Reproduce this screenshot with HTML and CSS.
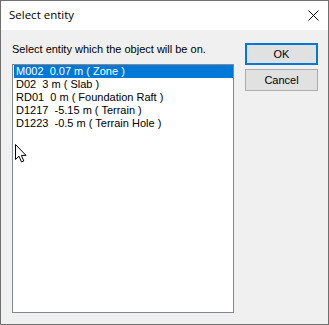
FILE: index.html
```html
<!DOCTYPE html>
<html lang="en">

<head>
    <meta charset="UTF-8">
    <title>Select entity</title>
    <link rel="stylesheet" href="styles.css">
</head>

<body>
    <div class="window">
        <!-- 标题栏 -->
        <div class="titlebar">
            <span class="title">Select entity</span>
            <svg class="close" width="11" height="11" viewBox="0 0 11 11">
                <path d="M0.5 0.5 L10.5 10.5 M10.5 0.5 L0.5 10.5" stroke="#000" stroke-width="1" fill="none" />
            </svg>
        </div>

        <!-- 内容区 -->
        <div class="content">
            <div class="left">
                <div class="label">Select entity which the object will be on.</div>
                <div class="list">
                    <div class="item selected">M002  0.07 m ( Zone )</div>
                    <div class="item">D02  3 m ( Slab )</div>
                    <div class="item">RD01  0 m ( Foundation Raft )</div>
                    <div class="item">D1217  -5.15 m ( Terrain )</div>
                    <div class="item">D1223  -0.5 m ( Terrain Hole )</div>
                    <svg class="cursor" width="13" height="20" viewBox="0 0 13 20">
                        <path d="M0.5 0.5 L0.5 15.5 L4 12.2 L6.5 18 L8.8 17 L6.4 11.4 L11 11.4 Z" fill="#fff" stroke="#000" stroke-width="1" stroke-linejoin="miter" />
                    </svg>
                </div>
            </div>
            <div class="buttons">
                <button class="btn default">OK</button>
                <button class="btn">Cancel</button>
            </div>
        </div>
    </div>
</body>

</html>
```

FILE: styles.css
```css
/* 页面基本样式 */
body {
    margin: 0;
    background-color: #f0f0f0;
}

/* 对话框窗口 */
.window {
    width: 329px;
    height: 325px;
    box-sizing: border-box;
    border: 1px solid #6f6f6f;
    background-color: #f0f0f0;
    display: flex;
    flex-direction: column;
}

/* 标题栏 */
.titlebar {
    height: 29px;
    background-color: #fff;
    display: flex;
    align-items: center;
    justify-content: space-between;
    padding: 0 9px 0 8px;
}

.title {
    font-family: "Open Sans", "Noto Sans", sans-serif;
    font-size: 11.5px;
    color: #000;
    margin-top: -2px;
}

.close {
    display: block;
}

/* 内容区 */
.content {
    display: flex;
    padding: 13px 0 0 11px;
    font-family: "Liberation Sans", Arial, sans-serif;
    font-size: 11px;
    color: #000;
}

.left {
    display: flex;
    flex-direction: column;
}

.label {
    height: 13px;
    line-height: 13px;
    margin-bottom: 8px;
}

/* 列表框 */
.list {
    width: 222px;
    height: 249px;
    box-sizing: border-box;
    border: 1px solid #828790;
    background-color: #fff;
    padding: 0 0 0 1px;
    position: relative;
}

.item {
    height: 13px;
    line-height: 13px;
    padding-left: 2px;
    white-space: pre;
}

.item.selected {
    background-color: #0078d7;
    color: #fff;
}

.cursor {
    position: absolute;
    left: 2px;
    top: 79px;
}

/* 按钮 */
.buttons {
    display: flex;
    flex-direction: column;
    gap: 4px;
    margin-left: 11px;
}

.btn {
    width: 73px;
    height: 22px;
    box-sizing: border-box;
    border: 1px solid #adadad;
    background-color: #e1e1e1;
    font-family: "Liberation Sans", Arial, sans-serif;
    font-size: 11px;
    color: #000;
    padding: 0;
}

.btn.default {
    border: 2px solid #0078d7;
}
```
